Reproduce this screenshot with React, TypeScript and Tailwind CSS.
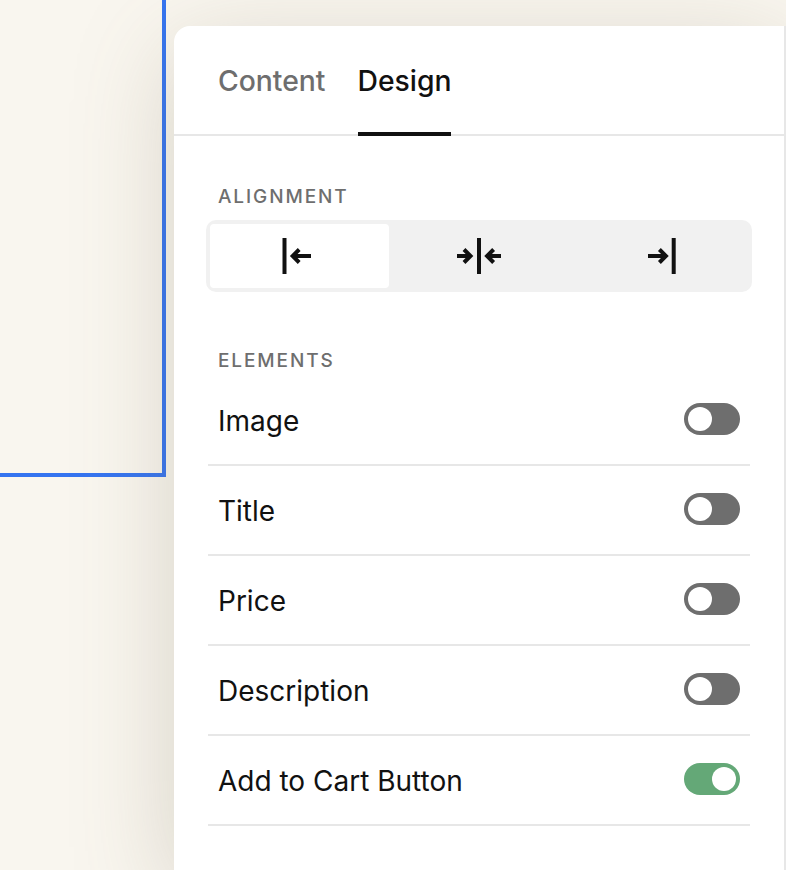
const rows = [
  { label: "Image", on: false },
  { label: "Title", on: false },
  { label: "Price", on: false },
  { label: "Description", on: false },
  { label: "Add to Cart Button", on: true },
];

const AlignLeft = () => (
  <svg width="36" height="36" viewBox="0 0 36 36" fill="none" stroke="#111111" strokeWidth="4">
    <path d="M2.5 0V36" />
    <path d="M29 18H12" />
    <path d="M17.2 11.5L10.7 18L17.2 24.5" />
  </svg>
);

const AlignCenter = () => (
  <svg width="46" height="36" viewBox="0 0 46 36" fill="none" stroke="#111111" strokeWidth="4">
    <path d="M23 0V36" />
    <path d="M1 18H13.5" />
    <path d="M8 11.5L14.5 18L8 24.5" />
    <path d="M45 18H32.5" />
    <path d="M37.6 11.5L31.1 18L37.6 24.5" />
  </svg>
);

const AlignRight = () => (
  <svg width="36" height="36" viewBox="0 0 36 36" fill="none" stroke="#111111" strokeWidth="4">
    <path d="M33.7 0V36" />
    <path d="M8 18H25" />
    <path d="M19.4 11.5L25.9 18L19.4 24.5" />
  </svg>
);

const Toggle = ({ on }: { on: boolean }) => (
  <div
    className={`mb-0.5 flex h-8 w-14 items-center rounded-full px-1 ${
      on ? "justify-end bg-[#64a877]" : "justify-start bg-[#6e6e6e]"
    }`}
  >
    <div className="h-6 w-6 rounded-full bg-white" />
  </div>
);

export default function App() {
  return (
    <div className="flex h-[870px] w-[786px] overflow-hidden bg-[#f9f6ef] font-['Inter',sans-serif]">
      <div className="w-[174px] shrink-0">
        <div className="h-[477px] w-[166px] border-r-4 border-b-4 border-[#3574f0]" />
      </div>

      <div className="mt-[26px] flex-1 rounded-tl-[16px] border-r-2 border-[#e7e7e7] bg-white shadow-[0_24px_100px_rgba(120,110,85,0.26)]">
        <div className="flex h-[110px] gap-8 border-b-2 border-[#e7e7e7] pl-11">
          <div className="flex h-[110px] items-center pt-[1px] text-[28.3px] font-medium text-[#6e6e6e]">Content</div>
          <div className="flex h-[110px] items-center border-b-4 border-[#111111] pt-[5px] text-[28.3px] font-medium text-[#111111]">
            Design
          </div>
        </div>

        <div className="px-8 pt-[51px]">
          <div className="pl-3 text-[19px] leading-5 font-medium tracking-[0.1em] text-[#6e6e6e]">ALIGNMENT</div>
          <div className="mt-[13px] grid h-[72px] w-[546px] grid-cols-3 rounded-[10px] bg-[#f1f1f1] p-1">
            <div className="flex items-center justify-center rounded bg-white">
              <AlignLeft />
            </div>
            <div className="flex items-center justify-center">
              <AlignCenter />
            </div>
            <div className="flex items-center justify-center">
              <AlignRight />
            </div>
          </div>

          <div className="mt-[59px] pl-3 text-[19px] leading-5 font-medium tracking-[0.1em] text-[#6e6e6e]">ELEMENTS</div>
          <div className="mt-[5px] w-[544px] pl-0.5">
            {rows.map((row) => (
              <div
                key={row.label}
                className="flex h-[90px] items-center justify-between border-b-2 border-[#e7e7e7] px-2.5 text-[28px] text-[#111111]"
              >
                <span className="mt-px">{row.label}</span>
                <Toggle on={row.on} />
              </div>
            ))}
          </div>
        </div>
      </div>
    </div>
  );
}
